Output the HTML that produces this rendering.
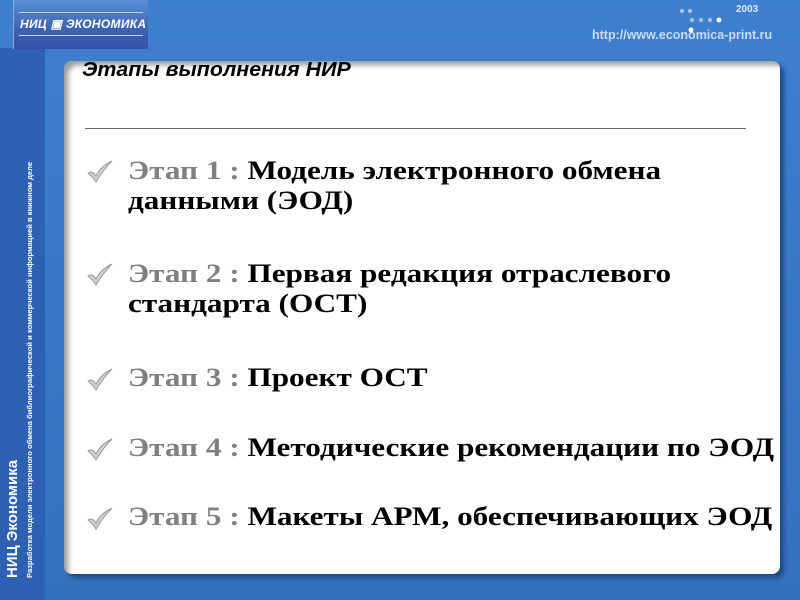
<!DOCTYPE html>
<html><head><meta charset="utf-8"><style>
body{margin:0;width:800px;height:600px;overflow:hidden;position:relative;font-family:"Liberation Sans",sans-serif;
background:linear-gradient(180deg,#3f7fcf 0%,#3a79c6 40%,#3471bd 100%);}
.strip{position:absolute;left:0;top:48px;width:45px;height:552px;background:#2e60b3;}
.logo{position:absolute;left:13px;top:0;width:134px;height:49px;background:linear-gradient(180deg,#5a8fd8,#3d62b0 60%,#3452a6);border-left:1px solid #8aa8dd;}
.logo span{position:absolute;left:6px;top:17px;color:#fff;font-weight:bold;font-style:italic;font-size:12px;letter-spacing:0.3px}
.logo .ln{position:absolute;left:5px;right:5px;height:1px;background:#c8d6f2}
.vt{position:absolute;color:#fff;white-space:nowrap;transform-origin:0 0;transform:rotate(-90deg)}
.panel{position:absolute;left:64px;top:61px;width:716px;height:513px;background:#fff;border-radius:8px;box-shadow:inset 6px 6px 6px -2px #999,4px 4px 4px #1e4a88;}
h1{position:absolute;left:82px;top:59px;margin:0;font-size:20px;font-style:italic;font-weight:bold;color:#000;transform:scaleX(1.07);transform-origin:0 0}
.rule{position:absolute;left:85px;top:128px;width:661px;height:1px;background:#666}
.it{position:absolute;left:128px;font-family:"Liberation Serif",serif;font-weight:bold;font-size:26px;line-height:30px;color:#000;white-space:nowrap;transform:scaleX(1.2);transform-origin:0 0}
.it b{color:#808080}
.ck{position:absolute;left:86px;}
</style></head><body>
<div class="strip"></div>
<div class="logo"><div class="ln" style="top:12px"></div><span>НИЦ ▣ ЭКОНОМИКА</span><div class="ln" style="top:35px"></div></div>
<div style="position:absolute;left:736px;top:4px;color:#dde8f8;font-size:10px;font-weight:bold">2003</div>
<div style="position:absolute;left:592px;top:28px;color:#c9dbf3;font-size:12.5px;font-weight:bold">http://www.economica-print.ru</div>
<svg style="position:absolute;left:672px;top:4px" width="70" height="30"><g fill="#a9c3ea"><circle cx="10" cy="7" r="2"/><circle cx="18" cy="7" r="2"/><circle cx="20" cy="16" r="2"/><circle cx="29" cy="16" r="2"/><circle cx="38" cy="16" r="2"/></g><circle cx="47" cy="16" r="2.5" fill="#fff"/><circle cx="19" cy="26" r="2.5" fill="#fff"/></svg>
<div class="vt" style="left:4px;top:578px;font-size:15px;font-weight:bold">НИЦ Экономика</div>
<div class="vt" style="left:25px;top:578px;font-size:7.6px;font-weight:bold">Разработка модели электронного обмена библиографической и коммерческой информацией в книжном деле</div>
<div class="panel"></div>
<h1>Этапы выполнения НИР</h1>
<div class="rule"></div>
<svg class="ck" style="top:160px" width="28" height="24"><path d="M2 13 Q6 10 10 16 Q15 6 26 1 Q17 10 10 22 Q7 17 2 13 Z" fill="#d2d2d2" stroke="#999" stroke-width="1"/></svg>
<svg class="ck" style="top:263px" width="28" height="24"><path d="M2 13 Q6 10 10 16 Q15 6 26 1 Q17 10 10 22 Q7 17 2 13 Z" fill="#d2d2d2" stroke="#999" stroke-width="1"/></svg>
<svg class="ck" style="top:368px" width="28" height="24"><path d="M2 13 Q6 10 10 16 Q15 6 26 1 Q17 10 10 22 Q7 17 2 13 Z" fill="#d2d2d2" stroke="#999" stroke-width="1"/></svg>
<svg class="ck" style="top:438px" width="28" height="24"><path d="M2 13 Q6 10 10 16 Q15 6 26 1 Q17 10 10 22 Q7 17 2 13 Z" fill="#d2d2d2" stroke="#999" stroke-width="1"/></svg>
<svg class="ck" style="top:507px" width="28" height="24"><path d="M2 13 Q6 10 10 16 Q15 6 26 1 Q17 10 10 22 Q7 17 2 13 Z" fill="#d2d2d2" stroke="#999" stroke-width="1"/></svg>
<div class="it" style="top:156px"><b>Этап 1 :</b> Модель электронного обмена<br>данными (ЭОД)</div>
<div class="it" style="top:259px"><b>Этап 2 :</b> Первая редакция отраслевого<br>стандарта (ОСТ)</div>
<div class="it" style="top:363px"><b>Этап 3 :</b> Проект ОСТ</div>
<div class="it" style="top:433px"><b>Этап 4 :</b> Методические рекомендации по ЭОД</div>
<div class="it" style="top:502px"><b>Этап 5 :</b> Макеты АРМ, обеспечивающих ЭОД</div>
</body></html>
